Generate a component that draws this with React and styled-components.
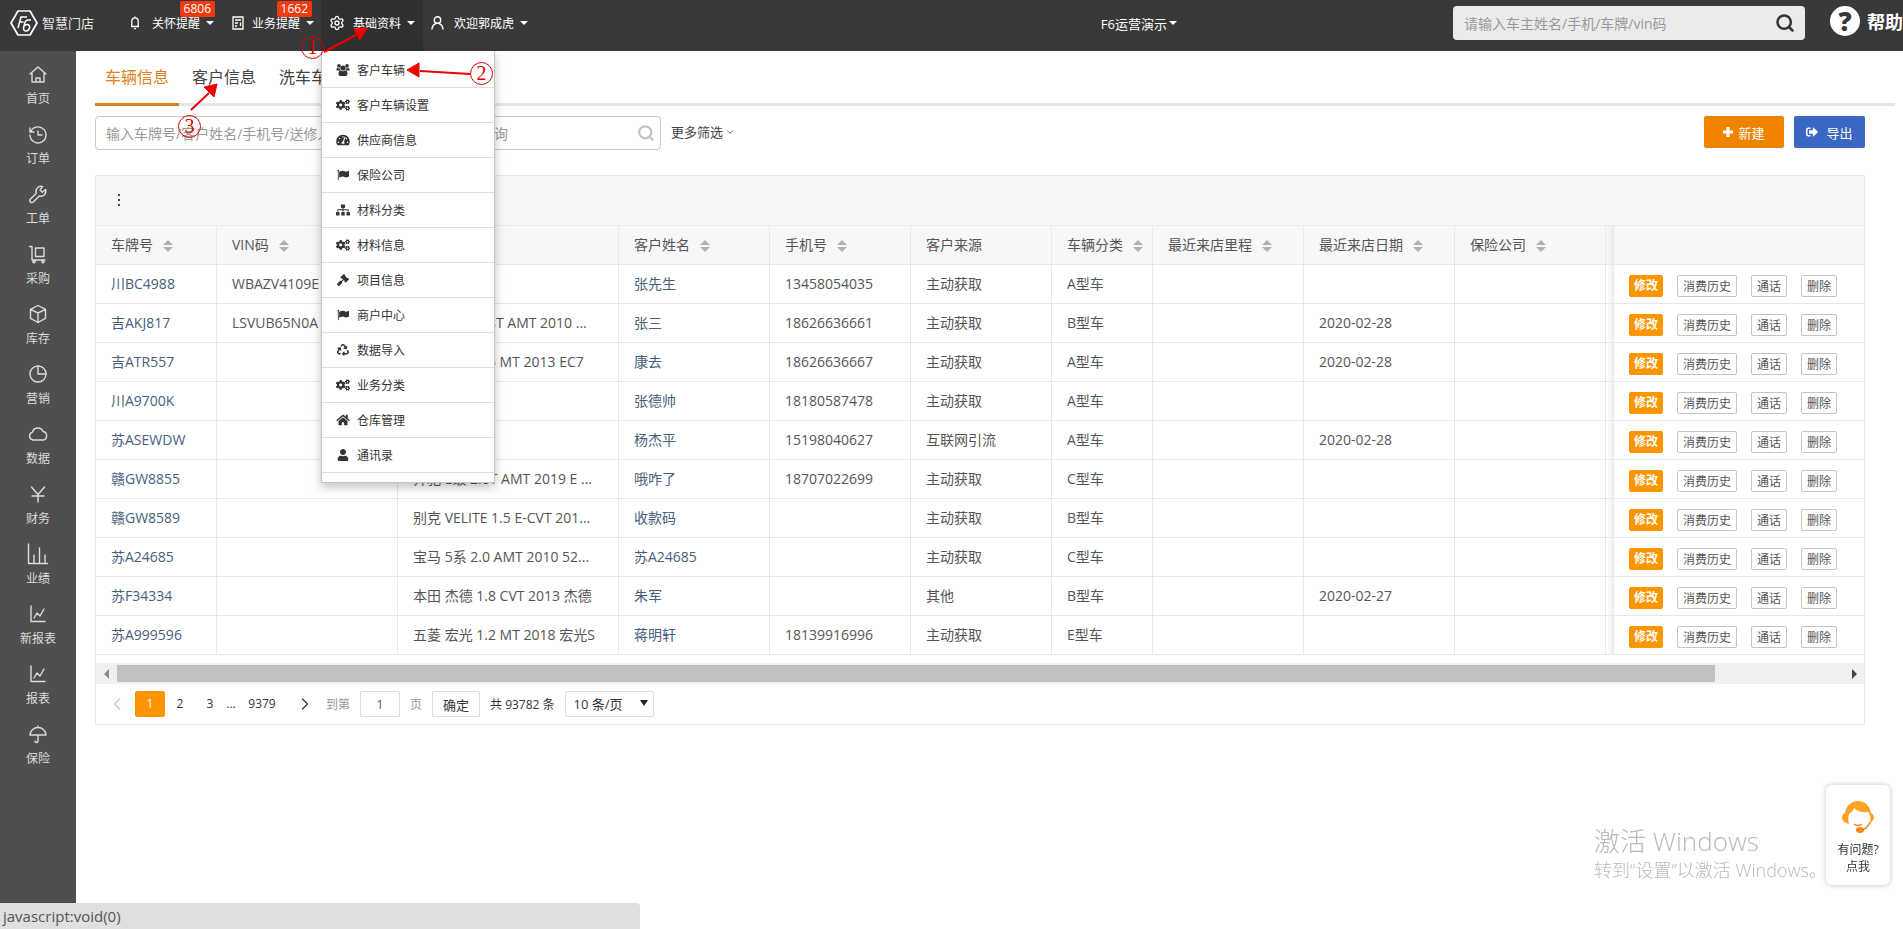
import React from "react";
import styled, { createGlobalStyle, css } from "styled-components";
import {
  FaCogs, FaTachometerAlt, FaSitemap, FaGavel, FaRecycle, FaHome, FaUser, FaSignOutAlt,
} from "react-icons/fa";
import { Search, ChevronDown, ChevronLeft, ChevronRight, Settings } from "lucide-react";

const GlobalStyle = createGlobalStyle`
  * { box-sizing: border-box; }
  body { margin: 0; background: #fff; }
  body, button, input, select {
    font-family: "Open Sans", "Noto Sans CJK SC", sans-serif;
    color: #555;
  }
  body { font-size: 14px; }
  a { color: inherit; text-decoration: none; }
  button { cursor: pointer; }
`;

/* ---------- top bar ---------- */

const TopBar = styled.header`
  display: flex;
  align-items: center;
  height: 51px;
  background: #393939;
  color: #fff;
  font-size: 12px;
`;

const Logo = styled.a`
  display: flex;
  align-items: center;
  gap: 4px;
  padding: 0 28px 6px 10px;
  font-size: 13px;
  color: #e8e8e8;
  white-space: nowrap;
`;

const TopNav = styled.nav`
  display: flex;
  flex: 1;
  height: 51px;
`;

const TopItem = styled.div`
  position: relative;
  width: ${(p) => p.$width}px;
  background: ${(p) => (p.$active ? "#303030" : "transparent")};
`;

const TopLink = styled.a`
  display: flex;
  align-items: center;
  height: 51px;
  padding: 0 8px 5px;
  white-space: nowrap;
  svg { flex: none; margin-right: ${(p) => p.$gap || 8}px; }
`;

const Caret = styled.i`
  margin-left: ${(p) => p.$gap || 6}px;
  border: 4px solid transparent;
  border-top-color: currentColor;
  border-bottom: 0;
`;

const Badge = styled.span`
  position: absolute;
  top: 1px;
  right: 9px;
  height: 16px;
  padding: 0 4px;
  border-radius: 2px;
  background: #f03a12;
  line-height: 16px;
  font-size: 12px;
`;

const StoreLink = styled.a`
  display: flex;
  align-items: center;
  padding-bottom: 5px;
  font-size: 13px;
  white-space: nowrap;
`;

const GlobalSearch = styled.form`
  display: flex;
  align-items: center;
  width: 352px;
  height: 34px;
  margin: 0 25px 5px 276px;
  padding: 0 10px 0 11px;
  border-radius: 4px;
  background: #ebebeb;
`;

const PlainInput = styled.input`
  flex: 1;
  min-width: 0;
  padding: 0;
  border: 0;
  outline: 0;
  background: transparent;
  font-size: 14px;
  &::placeholder { color: #999; opacity: 1; }
`;

const IconButton = styled.button`
  display: flex;
  padding: 0;
  border: 0;
  background: none;
  color: ${(p) => p.$color};
`;

const HelpLink = styled.a`
  display: flex;
  align-items: center;
  gap: 7px;
  padding-bottom: 9px;
  font-size: 18px;
  font-weight: 700;
  white-space: nowrap;
`;

const HelpMark = styled.span`
  width: 30px;
  height: 30px;
  border-radius: 50%;
  background: #fff;
  color: #393939;
  font-size: 26px;
  line-height: 30px;
  font-weight: 800;
  text-align: center;
`;

const DropMenu = styled.ul`
  position: absolute;
  z-index: 5;
  top: 51px;
  left: 0;
  width: 174px;
  margin: 0;
  padding: 2px 0 9px;
  list-style: none;
  background: #fff;
  border: 1px solid #c4c4c4;
  border-top: 0;
  box-shadow: 0 4px 10px rgba(0, 0, 0, 0.25);
`;

const DropLink = styled.a`
  display: flex;
  align-items: center;
  gap: 7px;
  height: 35px;
  padding-left: 14px;
  border-bottom: 1px solid #ddd;
  color: #333;
  svg { width: 14px; height: 12px; }
`;

/* ---------- frame ---------- */

const Frame = styled.div`
  display: flex;
  min-height: calc(100vh - 51px);
`;

const Sidebar = styled.nav`
  flex: none;
  width: 76px;
  padding-top: 12px;
  background: #4f4f4f;
`;

const SideLink = styled.a`
  display: flex;
  flex-direction: column;
  align-items: center;
  gap: 5px;
  height: 60px;
  color: #dcdcdc;
  font-size: 12px;
  line-height: 18px;
  svg { width: 22px; height: 22px; }
`;

const Main = styled.main`
  flex: 1;
  min-width: 0;
`;

const Tabs = styled.div`
  display: flex;
  gap: 3px;
  margin: 0 8px 0 19px;
  box-shadow: inset 0 -3px #e6e6e6;
`;

const Tab = styled.a`
  height: 55px;
  padding: 0 10px;
  border-bottom: 3px solid ${(p) => (p.$active ? "#d8821c" : "transparent")};
  color: ${(p) => (p.$active ? "#d8821c" : "#444")};
  font-size: 16px;
  line-height: 52px;
`;

const FilterBar = styled.div`
  display: flex;
  align-items: flex-start;
  margin: 10px 38px 0 19px;
`;

const FilterSearch = styled.form`
  display: flex;
  align-items: center;
  width: 566px;
  height: 34px;
  padding: 0 5px 0 10px;
  border: 1px solid #c8c8c8;
  border-radius: 4px;
`;

const MoreFilters = styled.button`
  display: flex;
  align-items: center;
  gap: 2px;
  height: 30px;
  margin: 0 auto 0 10px;
  padding: 0;
  border: 0;
  background: none;
  font-size: 13px;
  color: #444;
  svg { margin-top: 2px; }
`;

const ActionButton = styled.button`
  display: flex;
  align-items: center;
  justify-content: center;
  gap: ${(p) => (p.$primary ? 5 : 8)}px;
  width: ${(p) => (p.$primary ? 80 : 71)}px;
  height: 32px;
  margin-left: 10px;
  padding: 0;
  border: 0;
  border-radius: 2px;
  background: ${(p) => (p.$primary ? "#f08300" : "#3a66c4")};
  color: #fff;
  font-size: 13px;
`;

/* ---------- table ---------- */

const Panel = styled.section`
  margin: 25px 38px 0 19px;
  border: 1px solid #e8e8e8;
`;

const PanelTools = styled.div`
  display: flex;
  align-items: center;
  height: 50px;
  padding: 0 0 2px 21px;
  background: #f7f7f7;
  border-bottom: 1px solid #e8e8e8;
`;

const TableScroll = styled.div`
  overflow: hidden;
`;

const Table = styled.table`
  width: 100%;
  min-width: 1769px;
  table-layout: fixed;
  border-spacing: 0;
  line-height: 20px;
`;

const cell = css`
  height: 39px;
  padding: 0 14px 0 15px;
  border-right: 1px solid #e8e8e8;
  border-bottom: 1px solid #e8e8e8;
  text-align: left;
  font-weight: 400;
  white-space: nowrap;
  &:last-child { border-right: 0; }
`;

const HeadCell = styled.th`
  ${cell}
  background: #f7f7f7;
`;

const BodyCell = styled.td`
  ${cell}
  color: ${(p) => (p.$link ? "#46607c" : "#555")};
`;

const EdgeCell = styled.td`
  ${cell}
  padding: 0;
  background: linear-gradient(to right, ${(p) => (p.$head ? "#f7f7f7, #ececec" : "#fff, #f1f1f1")});
`;

const HeadLabel = styled.span`
  display: flex;
  align-items: center;
  gap: 10px;
`;

const SortMark = styled.span`
  display: flex;
  flex-direction: column;
  gap: 2px;
  padding-top: 1px;
  &::before, &::after { content: ""; border: 5px solid transparent; }
  &::before { border-top: 0; border-bottom-color: #b2b2b2; }
  &::after { border-bottom: 0; border-top-color: #b2b2b2; }
`;

const RowActions = styled.div`
  display: flex;
  gap: 14px;
  padding-top: 3px;
`;

const SmallButton = styled.button`
  height: 22px;
  width: ${(p) => p.$width || 36}px;
  padding: ${(p) => (p.$primary ? 0 : "1px 0 0")};
  border: 1px solid ${(p) => (p.$primary ? "#fb9500" : "#c4c4c4")};
  border-radius: 2px;
  background: ${(p) => (p.$primary ? "#fb9500" : "#fff")};
  color: ${(p) => (p.$primary ? "#fff" : "#555")};
  font-size: 12px;
  font-weight: ${(p) => (p.$primary ? 700 : 400)};
  line-height: 20px;
`;

const ScrollTrack = styled.div`
  display: flex;
  align-items: center;
  justify-content: space-between;
  height: 21px;
  margin-top: 8px;
  padding: 0 7px 0 8px;
  background: #f0f0f0;
`;

const ScrollThumb = styled.div`
  flex: 1;
  height: 17px;
  margin: 0 137px 0 8px;
  background: #c1c1c1;
`;

const ScrollArrow = styled.i`
  border: 5px solid transparent;
  ${(p) => (p.$left ? "border-left: 0; border-right-color: #8a8a8a;" : "border-right: 0; border-left-color: #444;")}
`;

const Pager = styled.div`
  display: flex;
  align-items: center;
  height: 40px;
  padding-left: 9px;
  font-size: 12px;
  color: #333;
`;

const PageLink = styled.a`
  width: ${(p) => p.$width || 30}px;
  height: 26px;
  border-radius: 2px;
  background: ${(p) => (p.$active ? "#ff9500" : "transparent")};
  color: ${(p) => (p.$active ? "#fff" : "#333")};
  line-height: 26px;
  text-align: center;
`;

const PageArrow = styled.button`
  display: flex;
  justify-content: ${(p) => (p.disabled ? "flex-start" : "flex-end")};
  width: 30px;
  padding: 0 2px;
  border: 0;
  background: none;
  color: ${(p) => (p.disabled ? "#c4c4c4" : "#333")};
`;

const PageJump = styled.label`
  display: flex;
  align-items: center;
  gap: 10px;
  margin: 0 10px 0 9px;
  color: #999;
`;

const PageInput = styled.input`
  width: 40px;
  height: 26px;
  padding: 0;
  border: 1px solid #ddd;
  border-radius: 2px;
  font-size: 12px;
  text-align: center;
`;

const ConfirmButton = styled.button`
  width: 48px;
  height: 26px;
  margin-right: 10px;
  padding: 0;
  border: 1px solid #ddd;
  border-radius: 2px;
  background: #fff;
  color: #333;
  font-size: 13px;
`;

const SizeBox = styled.span`
  position: relative;
  margin-left: 10px;
  &::after {
    content: "";
    position: absolute;
    right: 6px;
    top: 9px;
    border: 4px solid transparent;
    border-top: 6px solid #222;
    border-bottom: 0;
  }
`;

const SizeSelect = styled.select`
  appearance: none;
  width: 89px;
  height: 26px;
  padding: 0 20px 0 8px;
  border: 1px solid #ddd;
  border-radius: 2px;
  background: #fff;
  color: #333;
  font-size: 13px;
`;

/* ---------- floating parts ---------- */

const StatusBar = styled.div`
  position: fixed;
  left: 0;
  bottom: 0;
  width: 640px;
  max-width: 50%;
  height: 26px;
  padding-left: 3px;
  border-radius: 0 4px 0 0;
  background: #dfdfdf;
  font-size: 15px;
  line-height: 26px;
`;

const Watermark = styled.div`
  position: fixed;
  right: 78px;
  bottom: 46px;
  width: 231px;
  color: #bababa;
  font-size: 18px;
  line-height: 26px;
  font-weight: 300;
  white-space: nowrap;
  strong { display: block; font-size: 26px; line-height: 32px; font-weight: 300; }
`;

const SupportCard = styled.a`
  position: fixed;
  right: 13px;
  bottom: 44px;
  display: flex;
  flex-direction: column;
  align-items: center;
  width: 64px;
  height: 100px;
  padding-top: 15px;
  border-radius: 6px;
  background: #fff;
  box-shadow: 0 0 5px rgba(0, 0, 0, 0.25);
  color: #333;
  font-size: 12px;
  line-height: 17px;
  svg { margin-bottom: 7px; }
`;

const Marker = styled.span`
  position: absolute;
  z-index: 8;
  left: ${(p) => p.$x}px;
  top: ${(p) => p.$y}px;
  width: 23px;
  height: 23px;
  border: 1px solid #e00000;
  border-radius: 50%;
  color: #e00000;
  font: 20px/21px "Liberation Serif", serif;
  text-align: center;
`;

const Arrows = styled.svg`
  position: absolute;
  z-index: 7;
  top: 0;
  left: 0;
  pointer-events: none;
`;

/* ---------- icons ---------- */

const Line = ({ size = 22, children }) => (
  <svg width={size} height={size} viewBox="0 0 22 22" fill="none" stroke="currentColor" strokeWidth="1.4"
    strokeLinecap="round" strokeLinejoin="round" aria-hidden="true">
    {children}
  </svg>
);

const FlagIcon = () => (
  <svg viewBox="0 0 1792 1792" fill="currentColor" aria-hidden="true">
    <path d="M320 256q0 72-64 110v1266q0 13-9.500 22.500t-22.500 9.500h-64q-13 0-22.500-9.500t-9.500-22.500v-1266q-64-38-64-110 0-53 37.500-90.500t90.500-37.500 90.500 37.500 37.500 90.500zM1792 320v763q0 25-12.500 38.500t-39.500 27.500q-215 116-369 116-61 0-123.500-22t-108.500-48-115.500-48-142.500-22q-192 0-464 146-17 9-33 9-26 0-45-19t-19-45v-742q0-32 31-55 21-14 79-43 236-120 421-120 107 0 200 29t219 88q38 19 88 19 54 0 117.500-21t110-47 88-47 54.500-21q26 0 45 19t19 45z" />
  </svg>
);

const UsersIcon = () => (
  <svg viewBox="0 0 14 12" fill="currentColor" aria-hidden="true">
    <circle cx="3" cy="1.900" r="1.800" />
    <circle cx="11" cy="1.900" r="1.800" />
    <circle cx="7" cy="4" r="2.600" />
    <path d="M.5 6.500c0-1.600.4-2.900 1.200-2.600.8.500 1.600.6 2.200.4 0 1 .2 1.600.6 2.200zM13.500 6.500c0-1.600-.4-2.900-1.200-2.600-.8.500-1.600.6-2.200.4 0 1-.2 1.600-.6 2.200z" />
    <path d="M2.500 10c0-2 .6-3.600 2-3.600 1.600 1 3.400 1 5 0 1.400 0 2 1.600 2 3.600 0 1.300-.8 2-1.900 2H4.400c-1.100 0-1.900-.7-1.900-2z" />
  </svg>
);

const PlusIcon = () => (
  <svg width="10" height="10" viewBox="0 0 10 10" stroke="currentColor" strokeWidth="3" aria-hidden="true">
    <path d="M5 0v10M0 5h10" />
  </svg>
);

const LogoMark = () => (
  <svg width="28" height="26" viewBox="0 0 28 26" fill="none" stroke="#fff" strokeWidth="1.700" aria-hidden="true">
    <path d="M8 1h12l7 12-7 12H8L1 13z" strokeLinejoin="round" />
    <path d="M8 18l3-11h6M9.500 12h4M21 10h-3c-2 0-3 2-3.500 4l-1 4c0 2 1 3 2.500 3s3-1 3.500-3-.5-3.500-2.500-3.500-2.500 1-3 2" strokeWidth="1.500" />
  </svg>
);

const sideIcons = {
  home: <Line><path d="M3 11l8-7 8 7M5 9.500V19h12V9.500M9 19v-4h4v4" /></Line>,
  order: <Line><path d="M4 8a8 8 0 1 1-1 4M3 5v4h4M11 8v4h4" /></Line>,
  wrench: <Line><path d="M18.500 6.500l-3.200 2.700-2.300-2.200 2.600-3.400a5 5 0 0 0-6.300 6.600L3.500 16a2 2 0 0 0 2.800 3l6-6a5 5 0 0 0 6.200-6.500z" /></Line>,
  cart: <Line><path d="M2.500 3.500H5V17h13M8.500 5H17v8.500H8.500z" /><circle cx="7" cy="18.500" r="1.200" /><circle cx="16" cy="18.500" r="1.200" /></Line>,
  box: <Line><path d="M11 2.500l7.500 3.800v9L11 19.500l-7.500-4.200v-9zM3.500 6.300L11 10l7.500-3.700M11 10v9.500" /></Line>,
  pie: <Line><circle cx="11" cy="11" r="8" /><path d="M11 3v8h8" /></Line>,
  cloud: <Line><path d="M6 17a4 4 0 0 1-.5-7.800A5.500 5.500 0 0 1 16 8.500 4.300 4.300 0 0 1 16 17z" /></Line>,
  yen: <Line><path d="M4.500 4L11 11.500 17.500 4M11 11.500V19M5 13h12" /></Line>,
  bars: <Line><path d="M1.500 1v19.500h19M7 12v8M12.500 5v15M18 12v8" /></Line>,
  chart: <Line><path d="M4 3v15.500h14M7 15l3-5 3 3 4-7" /></Line>,
  umbrella: <Line><path d="M3 12a8 7.500 0 0 1 16 0zM11 4.500V3M11 12v6a1.500 1.500 0 0 1-3 0" /></Line>,
};

const BellIcon = () => (
  <svg width="10" height="14" viewBox="0 0 10 14" fill="none" stroke="#fff" strokeWidth="1.300" aria-hidden="true">
    <path d="M1 10.500h8M1.800 10.500V5a3.200 3.200 0 0 1 6.400 0v5.500M5 2V.5M4 12.700h2" />
  </svg>
);
const TaskIcon = () => (
  <svg width="12" height="14" viewBox="0 0 12 14" fill="none" stroke="#fff" strokeWidth="1.300" aria-hidden="true">
    <path d="M1 1h10v12H1zM3 4h6M3 7h3M8.500 6.500v3.500M3 10h2" />
  </svg>
);
const PersonIcon = () => (
  <svg width="13" height="14" viewBox="0 0 13 14" fill="none" stroke="#fff" strokeWidth="1.400" strokeLinecap="round" aria-hidden="true">
    <circle cx="6.500" cy="4" r="3.200" />
    <path d="M1 13c.3-3 2-4.800 4-5.500M12 13c-.3-3-2-4.800-4-5.500" />
  </svg>
);

const AgentIcon = () => (
  <svg width="34" height="34" viewBox="0 0 34 34" fill="none" aria-hidden="true">
    <path d="M4 13C5 6 10 1 17 1s12 5 13 12c2 1 3 3 3 4.500S32 21 29 23c1-6 0-9-2-11-5 1-10 0-14-4-1 3-3 5-5 6-1 3-1 6 0 10-4-1-7-3-7-6.500 0-2 1-3.500 3-4.500z" fill="#fca321" />
    <path d="M29 22c-2 5-5 8-10 8M13 24c2 2 6 2 8 0" stroke="#f08a1c" strokeWidth="1.600" />
    <ellipse cx="19" cy="30" rx="4" ry="3" fill="#f5871f" />
  </svg>
);

/* ---------- data ---------- */

const side = [
  ["home", "首页"], ["order", "订单"], ["wrench", "工单"], ["cart", "采购"], ["box", "库存"], ["pie", "营销"],
  ["cloud", "数据"], ["yen", "财务"], ["bars", "业绩"], ["chart", "新报表"], ["chart", "报表"], ["umbrella", "保险"],
];

const menu = [
  [UsersIcon, "客户车辆"], [FaCogs, "客户车辆设置"], [FaTachometerAlt, "供应商信息"], [FlagIcon, "保险公司"],
  [FaSitemap, "材料分类"], [FaCogs, "材料信息"], [FaGavel, "项目信息"], [FlagIcon, "商户中心"],
  [FaRecycle, "数据导入"], [FaCogs, "业务分类"], [FaHome, "仓库管理"], [FaUser, "通讯录"],
];

const columns = [
  ["车牌号", 121, true], ["VIN码", 181, true], ["车型", 221, false], ["客户姓名", 151, true], ["手机号", 141, true],
  ["客户来源", 141, false], ["车辆分类", 101, true], ["最近来店里程", 151, true], ["最近来店日期", 151, true],
  ["保险公司", 151, true],
];

const rows = [
  ["川BC4988", "WBAZV4109E", "", "张先生", "13458054035", "主动获取", "A型车", "", "", ""],
  ["吉AKJ817", "LSVUB65N0A", "大众 途安 1.8T AMT 2010 ...", "张三", "18626636661", "主动获取", "B型车", "", "2020-02-28", ""],
  ["吉ATR557", "", "吉利 帝豪 1.5 MT 2013 EC7", "康去", "18626636667", "主动获取", "A型车", "", "2020-02-28", ""],
  ["川A9700K", "", "", "张德帅", "18180587478", "主动获取", "A型车", "", "", ""],
  ["苏ASEWDW", "", "", "杨杰平", "15198040627", "互联网引流", "A型车", "", "2020-02-28", ""],
  ["赣GW8855", "", "奔驰 E级 2.0T AMT 2019 E ...", "哦咋了", "18707022699", "主动获取", "C型车", "", "", ""],
  ["赣GW8589", "", "别克 VELITE 1.5 E-CVT 201...", "收款码", "", "主动获取", "B型车", "", "", ""],
  ["苏A24685", "", "宝马 5系 2.0 AMT 2010 52...", "苏A24685", "", "主动获取", "C型车", "", "", ""],
  ["苏F34334", "", "本田 杰德 1.8 CVT 2013 杰德", "朱军", "", "其他", "B型车", "", "2020-02-27", ""],
  ["苏A999596", "", "五菱 宏光 1.2 MT 2018 宏光S", "蒋明轩", "18139916996", "主动获取", "E型车", "", "", ""],
];

/* ---------- page ---------- */

const stop = (e) => e.preventDefault();

const Header = () => (
  <TopBar>
    <Logo href="#"><LogoMark />智慧门店</Logo>
    <TopNav>
      <TopItem $width={102}>
        <TopLink href="#" $gap={12}><BellIcon />关怀提醒<Caret /></TopLink>
        <Badge>6806</Badge>
      </TopItem>
      <TopItem $width={97}>
        <TopLink href="#"><TaskIcon />业务提醒<Caret /></TopLink>
        <Badge>1662</Badge>
      </TopItem>
      <TopItem $width={102} $active>
        <TopLink href="#"><Settings size={16} />基础资料<Caret /></TopLink>
        <DropMenu>
          {menu.map(([Icon, label]) => (
            <li key={label}><DropLink href="#"><Icon />{label}</DropLink></li>
          ))}
        </DropMenu>
      </TopItem>
      <TopItem $width={114}>
        <TopLink href="#" $gap={10}><PersonIcon />欢迎郭成虎<Caret /></TopLink>
      </TopItem>
    </TopNav>
    <StoreLink href="#">F6运营演示<Caret $gap={2} /></StoreLink>
    <GlobalSearch onSubmit={stop}>
      <PlainInput aria-label="全局搜索" placeholder="请输入车主姓名/手机/车牌/vin码" />
      <IconButton $color="#333" aria-label="搜索"><Search size={20} strokeWidth={3} /></IconButton>
    </GlobalSearch>
    <HelpLink href="#"><HelpMark>?</HelpMark>帮助</HelpLink>
  </TopBar>
);

const DataTable = () => (
  <Table>
    <colgroup>
      {columns.map(([name, width]) => <col key={name} width={width} />)}
      <col />
      <col width="251" />
    </colgroup>
    <thead>
      <tr>
        {columns.map(([name, , sortable]) => (
          <HeadCell key={name} scope="col">
            <HeadLabel>{name}{sortable && <SortMark />}</HeadLabel>
          </HeadCell>
        ))}
        <EdgeCell $head />
        <HeadCell aria-label="操作" />
      </tr>
    </thead>
    <tbody>
      {rows.map((row) => (
        <tr key={row[0]}>
          {row.map((value, i) => {
            const link = i === 0 || i === 3;
            return <BodyCell key={i} $link={link}>{link ? <a href="#">{value}</a> : value}</BodyCell>;
          })}
          <EdgeCell />
          <BodyCell>
            <RowActions>
              <SmallButton $primary $width={34}>修改</SmallButton>
              <SmallButton $width={60}>消费历史</SmallButton>
              <SmallButton>通话</SmallButton>
              <SmallButton>删除</SmallButton>
            </RowActions>
          </BodyCell>
        </tr>
      ))}
    </tbody>
  </Table>
);

const Pagination = () => (
  <Pager>
    <PageArrow disabled aria-label="上一页"><ChevronLeft size={20} strokeWidth={1.5} /></PageArrow>
    <PageLink href="#" $active>1</PageLink>
    <PageLink href="#">2</PageLink>
    <PageLink href="#">3</PageLink>
    <PageLink as="span" $width={12}>...</PageLink>
    <PageLink href="#" $width={50}>9379</PageLink>
    <PageArrow aria-label="下一页"><ChevronRight size={20} strokeWidth={1.5} /></PageArrow>
    <PageJump>到第<PageInput defaultValue="1" />页</PageJump>
    <ConfirmButton>确定</ConfirmButton>
    共 93782 条
    <SizeBox>
      <SizeSelect aria-label="每页条数"><option>10 条/页</option></SizeSelect>
    </SizeBox>
  </Pager>
);

const Annotations = () => (
  <>
    <Arrows width="520" height="150" viewBox="0 0 520 150" stroke="#f00000" fill="#f00000" strokeWidth="2" aria-hidden="true">
      <path d="M324 52L356 35M470 74L420 71M191 110L209 93" />
      <path d="M367 28L354 29L360 40zM407 70L419 63L419 77zM217 84L204 87L214 97z" strokeWidth="1" />
    </Arrows>
    <Marker $x={301} $y={36}>1</Marker>
    <Marker $x={470} $y={62}>2</Marker>
    <Marker $x={178} $y={115}>3</Marker>
  </>
);

export default function App() {
  return (
    <>
      <GlobalStyle />
      <Header />
      <Frame>
        <Sidebar>
          {side.map(([icon, label]) => (
            <SideLink href="#" key={label}>{sideIcons[icon]}{label}</SideLink>
          ))}
        </Sidebar>
        <Main>
          <Tabs>
            <Tab href="#" $active>车辆信息</Tab>
            <Tab href="#">客户信息</Tab>
            <Tab href="#">洗车车辆</Tab>
          </Tabs>
          <FilterBar>
            <FilterSearch onSubmit={stop}>
              <PlainInput aria-label="查询车辆" placeholder="输入车牌号/客户姓名/手机号/送修人/送修人手机号/VIN码 等查询" />
              <IconButton $color="#c4c4c4" aria-label="查询"><Search size={18} strokeWidth={3} /></IconButton>
            </FilterSearch>
            <MoreFilters>更多筛选<ChevronDown size={10} /></MoreFilters>
            <ActionButton $primary><PlusIcon />新建</ActionButton>
            <ActionButton><FaSignOutAlt size={12} />导出</ActionButton>
          </FilterBar>
          <Panel>
            <PanelTools>
              <IconButton $color="#444" aria-label="更多">
                <svg width="4" height="14" viewBox="0 0 4 14" fill="currentColor" aria-hidden="true">
                  <path d="M1 1h2v2H1zM1 6h2v2H1zM1 11h2v2H1z" />
                </svg>
              </IconButton>
            </PanelTools>
            <TableScroll><DataTable /></TableScroll>
            <ScrollTrack>
              <ScrollArrow $left />
              <ScrollThumb />
              <ScrollArrow />
            </ScrollTrack>
            <Pagination />
          </Panel>
        </Main>
      </Frame>
      <Watermark><strong>激活 Windows</strong>转到“设置”以激活 Windows。</Watermark>
      <SupportCard href="#"><AgentIcon /><span>有问题?</span><span>点我</span></SupportCard>
      <StatusBar>javascript:void(0)</StatusBar>
      <Annotations />
    </>
  );
}
